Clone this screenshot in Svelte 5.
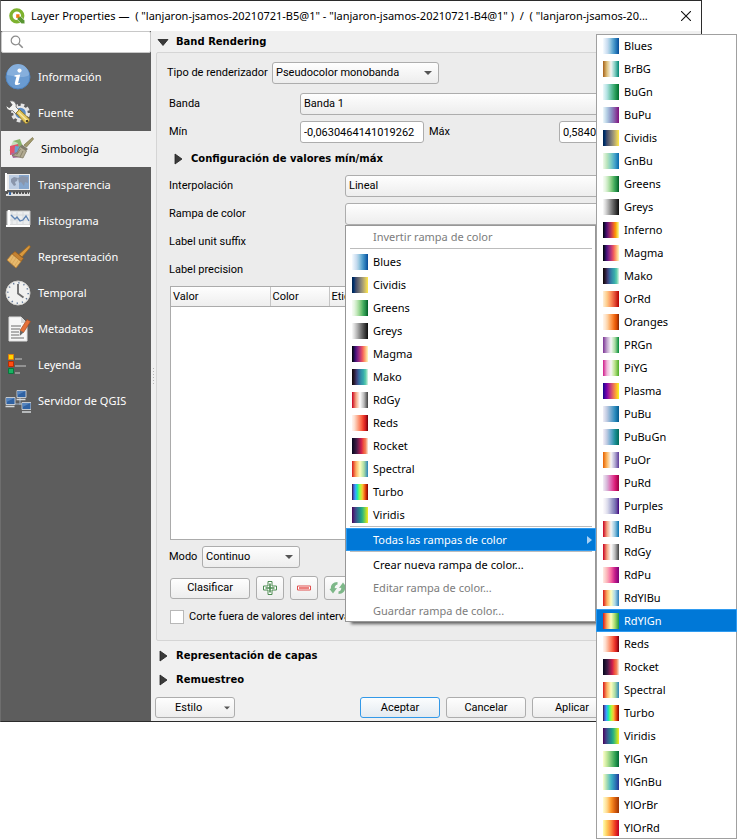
<script>
  const ramps = {
    Blues: ['#f7fbff', '#deebf7', '#c6dbef', '#9ecae1', '#6baed6', '#4292c6', '#2171b5', '#084a94'],
    BrBG: ['#a6611a', '#dfc27d', '#f5f5f5', '#80cdc1', '#018571'],
    BuGn: ['#edf8fb', '#b2e2e2', '#66c2a4', '#2ca25f', '#006d2c'],
    BuPu: ['#edf8fb', '#b3cde3', '#8c96c6', '#8856a7', '#810f7c'],
    Cividis: ['#00204d', '#00336f', '#39486b', '#575c6d', '#707173', '#8a8779', '#a69d75', '#c4b56c', '#e4cf5b', '#ffea46'],
    GnBu: ['#f0f9e8', '#bae4bc', '#7bccc4', '#43a2ca', '#0868ac'],
    Greens: ['#f7fcf5', '#e5f5e0', '#c7e9c0', '#a1d99b', '#74c476', '#41ab5d', '#238b45', '#005b25'],
    Greys: ['#fafafa', '#d8d8d8', '#b0b0b0', '#858585', '#5c5c5c', '#353535', '#0c0c0c'],
    Inferno: ['#000004', '#1b0c42', '#4b0c6b', '#781c6d', '#a52c60', '#cf4446', '#ed6925', '#fb9a06', '#f7d03c', '#fcffa4'],
    Magma: ['#000004', '#180f3e', '#451077', '#721f81', '#9f2f7f', '#cd4071', '#f1605d', '#fd9567', '#fec98d', '#fcfdbf'],
    Mako: ['#0b0405', '#2a1b32', '#3f3f76', '#366a9f', '#348fa7', '#38aaac', '#60ceac', '#def5e5'],
    OrRd: ['#fef0d9', '#fdcc8a', '#fc8d59', '#e34a33', '#b30000'],
    Oranges: ['#fff5eb', '#fee6ce', '#fdd0a2', '#fdae6b', '#fd8d3c', '#f16913', '#d94801', '#7f2704'],
    PRGn: ['#7b3294', '#c2a5cf', '#f7f7f7', '#a6dba0', '#008837'],
    PiYG: ['#d01c8b', '#f1b6da', '#f7f7f7', '#b8e186', '#4dac26'],
    Plasma: ['#0d0887', '#47039f', '#7301a8', '#9c179e', '#bd3786', '#d8576b', '#ed7953', '#fa9e3b', '#fdc926', '#f0f921'],
    PuBu: ['#f1eef6', '#bdc9e1', '#74a9cf', '#2b8cbe', '#045a8d'],
    PuBuGn: ['#f6eff7', '#bdc9e1', '#67a9cf', '#1c9099', '#016c59'],
    PuOr: ['#e66101', '#fdb863', '#f7f7f7', '#b2abd2', '#5e3c99'],
    PuRd: ['#f1eef6', '#d7b5d8', '#df65b0', '#dd1c77', '#980043'],
    Purples: ['#fcfbfd', '#efedf5', '#dadaeb', '#bcbddc', '#9e9ac8', '#807dba', '#6a51a3', '#3f007d'],
    RdBu: ['#ca0020', '#f4a582', '#f7f7f7', '#92c5de', '#0571b0'],
    RdGy: ['#ca0020', '#f4a582', '#ffffff', '#bababa', '#404040'],
    RdPu: ['#feebe2', '#fbb4b9', '#f768a1', '#c51b8a', '#7a0177'],
    RdYlBu: ['#d7191c', '#fdae61', '#ffffbf', '#abd9e9', '#2c7bb6'],
    RdYlGn: ['#d7191c', '#fdae61', '#ffffc0', '#a6d96a', '#1a9641'],
    Reds: ['#fff5f0', '#fee0d2', '#fcbba1', '#fc9272', '#fb6a4a', '#ef3b2c', '#cb181d', '#67000d'],
    Rocket: ['#03051a', '#221331', '#451c47', '#84204e', '#cb1b4f', '#ee523f', '#f3865e', '#faebdd'],
    Spectral: ['#d7191c', '#fdae61', '#ffffbf', '#abdda4', '#2b83ba'],
    Turbo: ['#30123b', '#4662d7', '#36aaf9', '#1ae4b6', '#72fe5e', '#c7ef34', '#faba39', '#f66b19', '#cb2a04', '#7a0403'],
    Viridis: ['#440154', '#482878', '#3e4a89', '#31688e', '#26828e', '#1f9e89', '#35b779', '#6dcd59', '#b4de2c', '#fde725'],
    YlGn: ['#ffffcc', '#c2e699', '#78c679', '#31a354', '#006837'],
    YlGnBu: ['#ffffcc', '#a1dab4', '#41b6c4', '#2c7fb8', '#253494'],
    YlOrBr: ['#ffffd4', '#fed98e', '#fe9929', '#d95f0e', '#993404'],
    YlOrRd: ['#ffffb2', '#fecc5c', '#fd8d3c', '#f03b20', '#bd0026'],
  };
  const favourites = ['Blues', 'Cividis', 'Greens', 'Greys', 'Magma', 'Mako', 'RdGy', 'Reds', 'Rocket', 'Spectral', 'Turbo', 'Viridis'];
  const sections = [
    ['info', 'Información'],
    ['source', 'Fuente'],
    ['symbology', 'Simbología'],
    ['transparency', 'Transparencia'],
    ['histogram', 'Histograma'],
    ['rendering', 'Representación'],
    ['temporal', 'Temporal'],
    ['metadata', 'Metadatos'],
    ['legend', 'Leyenda'],
    ['server', 'Servidor de QGIS'],
  ];
  let active = $state('symbology');
  let picked = $state('RdYlGn');
  const fill = (name) => `linear-gradient(90deg, ${ramps[name].join(', ')})`;
</script>

{#snippet icon(id)}
  <svg class="nav-icon" viewBox="0 0 26 26" aria-hidden="true">
    {#if id === 'info'}
      <circle cx="13" cy="13" r="12" fill="#6a9bd1" stroke="#4f84c0" />
      <path d="M2 11a11 11 0 0 1 22 0c-5 4-16 1-22 0z" fill="#86afdc" />
      <circle cx="14.5" cy="6.6" r="2.1" fill="#fff" />
      <path d="M9.6 11.3l5.6-.9-2 8.2c-.2 1 .6.9 2 .1l-.3 1.2c-2.6 1.8-5.7 1.6-5-1.2l1.5-5.9-1.9-.3z" fill="#fff" />
    {:else if id === 'source'}
      <circle cx="15.500" cy="13" r="8" fill="none" stroke="#e4e4e4" stroke-width="3" stroke-dasharray="3.600 2.680" />
      <circle cx="15.500" cy="13" r="6.300" fill="#5b8cc4" stroke="#e8e8e8" stroke-width="2" />
      <path d="M4.500 1.200c4-1.400 7.500 1.800 6.500 5.800l4 4-3.500 3.500-4-4C4 11.500 1 9 1.200 5.500l3 2.300 3-2.800z" fill="#f4f4f1" stroke="#4d4d4d" stroke-width=".7" />
      <path d="M11 13l3.500-3.500 10 9.500c.5 2-2 4.800-4 4.500z" fill="#e3c65c" stroke="#8b7428" stroke-width=".9" />
      <path d="M13.500 12.500l8.500 8" stroke="#f8e9a4" stroke-width="1.500" />
      <circle cx="22" cy="21" r="1.100" fill="#222" />
    {:else if id === 'symbology'}
      <path d="M5 5l7-2 3 8-9 2z" fill="#8ab36b" />
      <path d="M5 5l5 2-3 7-6 1z" fill="#c5dfbd" />
      <path d="M2 10l8-2 1 9-9 2z" fill="#e2526b" />
      <path d="M7 10l8 1 1 8-10 2z" fill="#6d9ed0" />
      <path d="M3 17l7-1 4 5-9 1z" fill="#a76b9b" />
      <path d="M24.500 1.500l1 1.500-7 8-2.500-2z" fill="#a39b6d" stroke="#827b50" stroke-width=".8" />
      <path d="M14 8.500l6 4.500-2 2-6-4.500z" fill="#807c6c" />
      <path d="M12 10.500l6.500 4.500-3.500 7-11-2.500 5-2.500z" fill="#b1aa91" stroke="#77715b" stroke-width=".7" />
      <path d="M12.500 13l-4 6M15 15l-3 6" stroke="#888169" />
    {:else if id === 'transparency'}
      <path d="M1 2h24v16H1z" fill="#ebebeb" />
      <path d="M4 3h20v14H4z" fill="#86a6cd" />
      <path d="M4 3h10v14H4z" fill="#bdcde2" />
      <path d="M6 7l3-2 4 1-1 3-2 1 1 3-2 1-3-4zM13 6l4-2 6 1v6l-3-1-1 4-3-4-2 1z" fill="#8a96ab" />
      <path d="M1 1v18" stroke="#fff" stroke-width="2" />
      <path d="M1 20.500h24v3.500H1z" fill="#dedede" />
      <path d="M1 21h6M8 21h16" stroke="#2f2f2f" stroke-width="1.500" stroke-dasharray="2 1" />
      <path d="M5 20v3" stroke="#3465a4" stroke-width="2" />
    {:else if id === 'histogram'}
      <path d="M2 3h23v14H2z" fill="#eceeef" stroke="#c7c7c7" />
      <path d="M4 2v16M1 18h24" stroke="#fff" stroke-width="2" />
      <path d="M7 4v12M12 4v12M18 4v12M5 7h19M5 12h19" stroke="#d6d9dc" />
      <path d="M6 7l4 4 2-2 3 4 3-1 3-4 3 5" fill="none" stroke="#5f84b4" stroke-width="1.300" />
    {:else if id === 'rendering'}
      <path d="M24 1.500c1.400.2 1.400 1.500.7 2.400l-7.700 9-3.200-2.500z" fill="#d9993e" stroke="#9c651d" stroke-width=".8" />
      <path d="M10 7.500l8.500 7-2.500 3-9-7.500z" fill="#c58232" stroke="#935b1a" stroke-width=".7" />
      <path d="M7 10l9 7.500-5 6.500L2 16z" fill="#e7b96c" stroke="#b57a2d" stroke-width=".8" />
      <path d="M8.500 12L5 18M11 14l-4 6M13.500 16L9.500 22" stroke="#d09c52" stroke-width=".6" />
    {:else if id === 'temporal'}
      <circle cx="13" cy="13" r="12" fill="#f1f1ef" stroke="#d3d3d0" />
      <circle cx="13" cy="13" r="10.200" fill="none" stroke="#637999" stroke-width="1.500" stroke-dasharray="1.300 4.040" />
      <path d="M13 4v9.500l5.500 4" fill="none" stroke="#6a6a6a" stroke-width="1.800" />
    {:else if id === 'metadata'}
      <path d="M4 1h12l6 6v18H4z" fill="#f7f7f7" stroke="#dedede" />
      <path d="M16 1v6h6z" fill="#d5d5d5" />
      <path d="M6 10h10M6 13h9M6 16h8M6 19h8M6 22h13" stroke="#9a9a9a" stroke-width="1.300" />
      <path d="M22 3.500l3.500 2-7 11-3.500-2z" fill="#e57039" stroke="#a44b20" stroke-width=".7" />
      <path d="M15 14.500l3.500 2-3.800 3.500z" fill="#696969" />
    {:else if id === 'legend'}
      <path d="M3.500 2.500h5v5h-5z" fill="#ffd500" stroke="#e07d10" />
      <path d="M3.500 9.500h5v5h-5z" fill="#ff4d12" stroke="#b92c00" />
      <path d="M3.500 16.500h5v5h-5z" fill="#18b262" stroke="#08783d" />
      <path d="M10 7h7M10 14h11M10 21h5" stroke="#929292" stroke-width="1.800" />
    {:else}
      <path d="M8 16h12M15 10v7" stroke="#9db0c6" />
      <g stroke="#d0d4d8" stroke-width=".9">
        <path d="M12 2.500h9v7h-9zM1 9.500h9v7H1zM17 14.500h9v7h-9z" fill="#2f62a3" />
      </g>
      <path d="M12.500 3h8l-8 4zM1.500 10h8l-8 4zM17.500 15h8l-8 4z" fill="#5483bd" />
      <path d="M11.500 11.500h9M.5 18.500h9M17 24h9" stroke="#d5d9dc" stroke-width="1.700" />
    {/if}
  </svg>
{/snippet}

{#snippet caret()}
  <svg class="caret" viewBox="0 0 8 4" aria-hidden="true"><path d="M0 0h8L4 4z" fill="#555" /></svg>
{/snippet}

{#snippet twisty(open)}
  <svg class="twisty" viewBox="0 0 12 12" aria-hidden="true">
    <path d={open ? 'M1 3.500h10L6 9.500z' : 'M3 1v10l7-5z'} fill="#3a3a3a" stroke="#222" stroke-width=".8" />
  </svg>
{/snippet}

{#snippet rampItem(name)}
  <button class="item" role="menuitem">
    <span class="swatch" style="background: {fill(name)}"></span>{name}
  </button>
{/snippet}

<div class="page">
  <div class="window">
    <header>
      <svg class="logo" viewBox="0 0 16 16" aria-hidden="true">
        <circle cx="7.800" cy="7.800" r="5.900" fill="none" stroke="#7db22f" stroke-width="3.400" />
        <path d="M8.300 8.300h3.300l4.200 4.300v3.200h-3.200L8.300 11.500z" fill="#589632" stroke="#fff" stroke-width=".6" />
        <path d="M7.200 6.200h3.300v3.300l-3.300.4z" fill="#ee7913" />
      </svg>
      <h1>Layer Properties —  ( "lanjaron-jsamos-20210721-B5@1" - "lanjaron-jsamos-20210721-B4@1" )  /  ( "lanjaron-jsamos-20...</h1>
      <button class="close" aria-label="Cerrar">
        <svg viewBox="0 0 10 10" aria-hidden="true"><path d="M0 0l10 10M10 0L0 10" stroke="#111" stroke-width="1.100" /></svg>
      </button>
    </header>

    <div class="body">
      <aside>
        <label class="search">
          <svg viewBox="0 0 14 14" aria-hidden="true"><circle cx="5.500" cy="5.500" r="4.300" fill="none" stroke="#8c8c8c" stroke-width="1.200" /><path d="M8.700 8.700l4 4" stroke="#8c8c8c" stroke-width="1.600" /></svg>
          <input type="search" aria-label="Buscar" />
        </label>
        <nav>
          {#each sections as [id, label]}
            <button class:active={active === id} onclick={() => (active = id)}>{@render icon(id)}{label}</button>
          {/each}
        </nav>
      </aside>
      <div class="grip"><i></i></div>

      <main>
        <h2>{@render twisty(true)}Band Rendering</h2>
        <section class="group">
          <div class="row first">
            <label for="renderer">Tipo de renderizador</label>
            <span class="combo renderer"><select id="renderer"><option>Pseudocolor monobanda</option></select>{@render caret()}</span>
          </div>
          <div class="row band">
            <label for="band">Banda</label>
            <span class="combo grow"><select id="band"><option>Banda 1</option></select></span>
          </div>
          <div class="row band">
            <label for="min">Mín</label>
            <input id="min" class="num" value="-0,0630464141019262" />
            <label for="max" class="max">Máx</label>
            <input id="max" class="num" value="0,5840" />
          </div>
          <h3>{@render twisty(false)}Configuración de valores mín/máx</h3>
          <div class="row ramp">
            <label for="interp">Interpolación</label>
            <span class="combo grow"><select id="interp"><option>Lineal</option></select></span>
          </div>
          <div class="row ramp">
            <span class="label">Rampa de color</span>
            <div class="picker">
              <button class="ramp-button" aria-label="Rampa de color" aria-haspopup="menu"></button>
              <div class="menu main-menu" role="menu">
                <button class="item" role="menuitem" disabled>Invertir rampa de color</button>
                <hr />
                {#each favourites as name}{@render rampItem(name)}{/each}
                <hr />
                <button class="item hot" role="menuitem">Todas las rampas de color
                  <svg class="more" viewBox="0 0 5 8" aria-hidden="true"><path d="M0 0l5 4-5 4z" fill="#a9d1f5" /></svg>
                </button>
                <hr />
                <button class="item" role="menuitem">Crear nueva rampa de color...</button>
                <button class="item" role="menuitem" disabled>Editar rampa de color...</button>
                <button class="item" role="menuitem" disabled>Guardar rampa de color...</button>
              </div>
            </div>
          </div>
          <div class="row ramp"><span class="label">Label unit suffix</span></div>
          <div class="row ramp"><span class="label">Label precision</span></div>

          <div class="table-box">
            <table>
              <thead><tr><th class="value">Valor</th><th class="color">Color</th><th>Etiqueta</th></tr></thead>
            </table>
          </div>

          <div class="row mode">
            <label for="mode">Modo</label>
            <span class="combo"><select id="mode"><option>Continuo</option></select>{@render caret()}</span>
          </div>
          <div class="row actions">
            <button class="push">Clasificar</button>
            <button class="tool" aria-label="Añadir">
              <svg viewBox="0 0 16 16" aria-hidden="true"><path d="M6 1.500h4V6h4.500v4H10v4.500H6V10H1.500V6H6z" fill="#fff" stroke="#4a8a4f" /><path d="M8 3.500v9M3.500 8h9" stroke="#4a8a4f" stroke-width="1.600" /></svg>
            </button>
            <button class="tool" aria-label="Quitar">
              <svg viewBox="0 0 16 16" aria-hidden="true"><path d="M1.500 6h13v4h-13z" fill="#fff" stroke="#e0504f" /><path d="M3 8h10" stroke="#e8625f" stroke-width="1.600" /></svg>
            </button>
            <button class="tool" aria-label="Invertir">
              <svg viewBox="0 0 16 16" aria-hidden="true"><path d="M7.500 2C3 2 .5 5 1 8.500L-.5 9 3 13.500 7 8 4.800 8.300C4.500 6.500 5.500 5 7.500 4.500zM8.500 14c4.500 0 7-3 6.500-6.500l1.500-.5L13 2.500 9 8l2.200-.3c.3 1.800-.7 3.300-2.700 3.800z" fill="#7db788" /></svg>
            </button>
          </div>
          <label class="check"><input type="checkbox" />Corte fuera de valores del intervalo</label>
        </section>
        <h2 class="closed">{@render twisty(false)}Representación de capas</h2>
        <h2 class="closed">{@render twisty(false)}Remuestreo</h2>
        <footer>
          <button class="push style">Estilo{@render caret()}</button>
          <button class="push default">Aceptar</button>
          <button class="push">Cancelar</button>
          <button class="push">Aplicar</button>
        </footer>
      </main>
    </div>
  </div>

  <div class="menu all-ramps" role="menu">
    {#each Object.keys(ramps) as name}
      <button class="item" class:hot={picked === name} role="menuitem" onclick={() => (picked = name)}>
        <span class="swatch" style="background: {fill(name)}"></span>{name}
      </button>
    {/each}
  </div>
</div>

<style>
  :global(body) { background: #fff; }
  .page {
    position: relative;
    min-height: 839px;
    font: 11px/14px Roboto, "Open Sans", sans-serif;
    color: #000;
  }
  .page * { box-sizing: border-box; }
  button, input, select { font: inherit; color: inherit; margin: 0; }
  .window {
    margin-right: 35px;
    border: 1px solid #2b2b2b;
    border-left-color: #6e6e6e;
    background: #f0f0f0;
  }
  header {
    display: flex;
    align-items: center;
    height: 30px;
    padding: 0 10px 0 8px;
    background: #fff;
  }
  .logo { width: 16px; height: 16px; flex: none; margin-right: 6px; }
  h1 {
    flex: 1;
    margin: 0;
    font: 400 11px/16px "Noto Sans", "Open Sans", sans-serif;
    white-space: pre;
    overflow: hidden;
  }
  .close { display: flex; padding: 0; border: 0; background: none; }
  .close svg { width: 10px; height: 10px; }
  .body { display: flex; }
  aside { flex: none; width: 150px; background: #5d5d5d; }
  .search {
    display: flex;
    align-items: center;
    height: 22px;
    padding: 0 8px;
    background: #fff;
    border: 1px solid #c8c8c8;
    border-radius: 2px;
  }
  .search svg { width: 14px; height: 14px; flex: none; }
  .search input { min-width: 0; flex: 1; border: 0; padding: 0 4px; outline: 0; background: none; }
  nav { padding-top: 6px; }
  nav button {
    display: flex;
    align-items: center;
    gap: 7px;
    width: 100%;
    height: 36px;
    padding: 0 4px;
    border: 0;
    background: none;
    color: #fff;
    font: 11px/16px "Noto Sans", "Open Sans", sans-serif;
    white-space: nowrap;
  }
  nav button.active { background: #f0f0f0; color: #000; padding-left: 7px; }
  .nav-icon { width: 26px; height: 26px; flex: none; }
  .grip { display: flex; align-items: center; width: 4px; flex: none; padding-left: 2px; }
  .grip i { width: 1px; height: 17px; background: repeating-linear-gradient(#b5b5b5 0 1px, #f0f0f0 1px 3px); }
  main { flex: 1; min-width: 0; padding: 0 4px 3px 1px; }
  h2, h3 {
    display: flex;
    align-items: center;
    gap: 7px;
    margin: 0;
    height: 21px;
    padding-left: 1px;
    font: bold 10px/14px "DejaVu Sans", Verdana, sans-serif;
  }
  h3 { height: 32px; padding-left: 2px; }
  .closed { height: 24px; }
  .twisty { width: 12px; height: 12px; flex: none; }
  .group {
    display: flex;
    flex-direction: column;
    border: 1px solid #d5d5d5;
    border-radius: 2px;
    background: #ececec;
    padding: 9px 13px 16px;
    margin-bottom: 3px;
  }
  .row { display: flex; align-items: center; height: 22px; margin-bottom: 6px; }
  .row.first { margin: 0 0 9px -3px; }
  .row.first label { width: 105px; flex: none; }
  .band > :first-child { width: 130px; }
  .ramp > :first-child { width: 175px; }
  .band > :first-child, .ramp > :first-child { flex: none; margin-left: -1px; margin-right: 1px; }
  .band:has(.num) { margin-bottom: 0; }
  .combo { display: grid; align-items: center; }
  .combo > :global(*) { grid-area: 1 / 1; }
  .grow { flex: 1; }
  select, .ramp-button {
    appearance: none;
    width: 100%;
    height: 22px;
    padding: 0 24px 0 3px;
    border: 1px solid #adadad;
    border-radius: 3px;
    background: linear-gradient(#fefefe, #ededed);
  }
  .renderer { width: 167px; }
  .caret { justify-self: end; width: 8px; height: 4px; margin-right: 7px; pointer-events: none; }
  .num {
    width: 124px;
    height: 22px;
    padding: 0 3px;
    border: 1px solid #adadad;
    border-radius: 3px;
    background: #fff;
  }
  .max { width: 130px; margin-left: 5px; }
  .picker { position: relative; flex: 1; height: 22px; }
  .ramp-button { display: block; }
  .table-box { height: 254px; margin-top: -1px; border: 1px solid #ababab; background: #fff; }
  table { width: 100%; border-collapse: collapse; table-layout: fixed; }
  thead { background: linear-gradient(#fefefe, #eeeeee); }
  th {
    height: 19px;
    padding: 2px 0 0 2px;
    border-right: 1px solid #c5c5c5;
    border-bottom: 1px solid #ababab;
    font-weight: 400;
    text-align: left;
  }
  th.value { width: 99px; }
  th.color { width: 59px; }
  .mode { margin: 6px 0 8px -1px; }
  .mode label { width: 33px; }
  .mode .combo { width: 98px; }
  .actions { height: 24px; margin-bottom: 10px; gap: 6px; }
  .push {
    width: 80px;
    height: 21px;
    padding: 0;
    border: 1px solid #adadad;
    border-radius: 3px;
    background: linear-gradient(#fefefe, #ededed);
    text-align: center;
  }
  .push.default { border-color: #3399e8; background: linear-gradient(#fbfdfe, #e3eaf0); }
  .tool {
    display: grid;
    place-items: center;
    width: 28px;
    height: 24px;
    padding: 0;
    border: 1px solid #adadad;
    border-radius: 3px;
    background: linear-gradient(#fefefe, #ededed);
  }
  .tool svg { width: 16px; height: 16px; overflow: visible; }
  .check { display: flex; align-items: center; gap: 5px; white-space: nowrap; }
  .check input { appearance: none; width: 14px; height: 14px; border: 1px solid #b8b8b8; background: #fff; }
  footer { display: flex; gap: 6px; margin-top: 5px; padding-right: 85px; }
  .style { display: flex; align-items: center; justify-content: space-between; margin: 0 auto 0 -1px; padding: 0 4px 0 19px; }
  .style .caret { width: 6px; height: 4px; margin: 0; }
  .menu {
    position: absolute;
    z-index: 2;
    background: #fff;
    box-shadow: inset 0 0 0 1px #a0a0a0;
    font: 11px/16px "Noto Sans", "Open Sans", sans-serif;
  }
  .main-menu {
    top: 100%;
    left: 0;
    width: 251px;
    box-shadow: inset 0 0 0 1px #979797, 4px 4px 3px -2px rgba(0, 0, 0, 0.6);
    padding-left: 1px;
  }
  .main-menu .item { padding-left: 27px; }
  .main-menu .item:has(.swatch) { padding-left: 6px; }
  .all-ramps { top: 34px; left: 596px; right: 0; }
  .item {
    display: flex;
    align-items: center;
    gap: 5px;
    width: 100%;
    height: 23px;
    padding: 0 4px 0 7px;
    border: 0;
    background: none;
    text-align: left;
    white-space: nowrap;
  }
  .item:disabled { color: #7c7c7c; }
  .item.hot { background: #0078d7; color: #fff; box-shadow: inset 0 0 0 1px #2f9bf0; }
  .swatch { width: 16px; height: 16px; flex: none; }
  .more { width: 5px; height: 8px; margin-left: auto; }
  hr { height: 2px; margin: 0 4px; border: 0; border-top: 1px solid #bcbcbc; }
</style>
